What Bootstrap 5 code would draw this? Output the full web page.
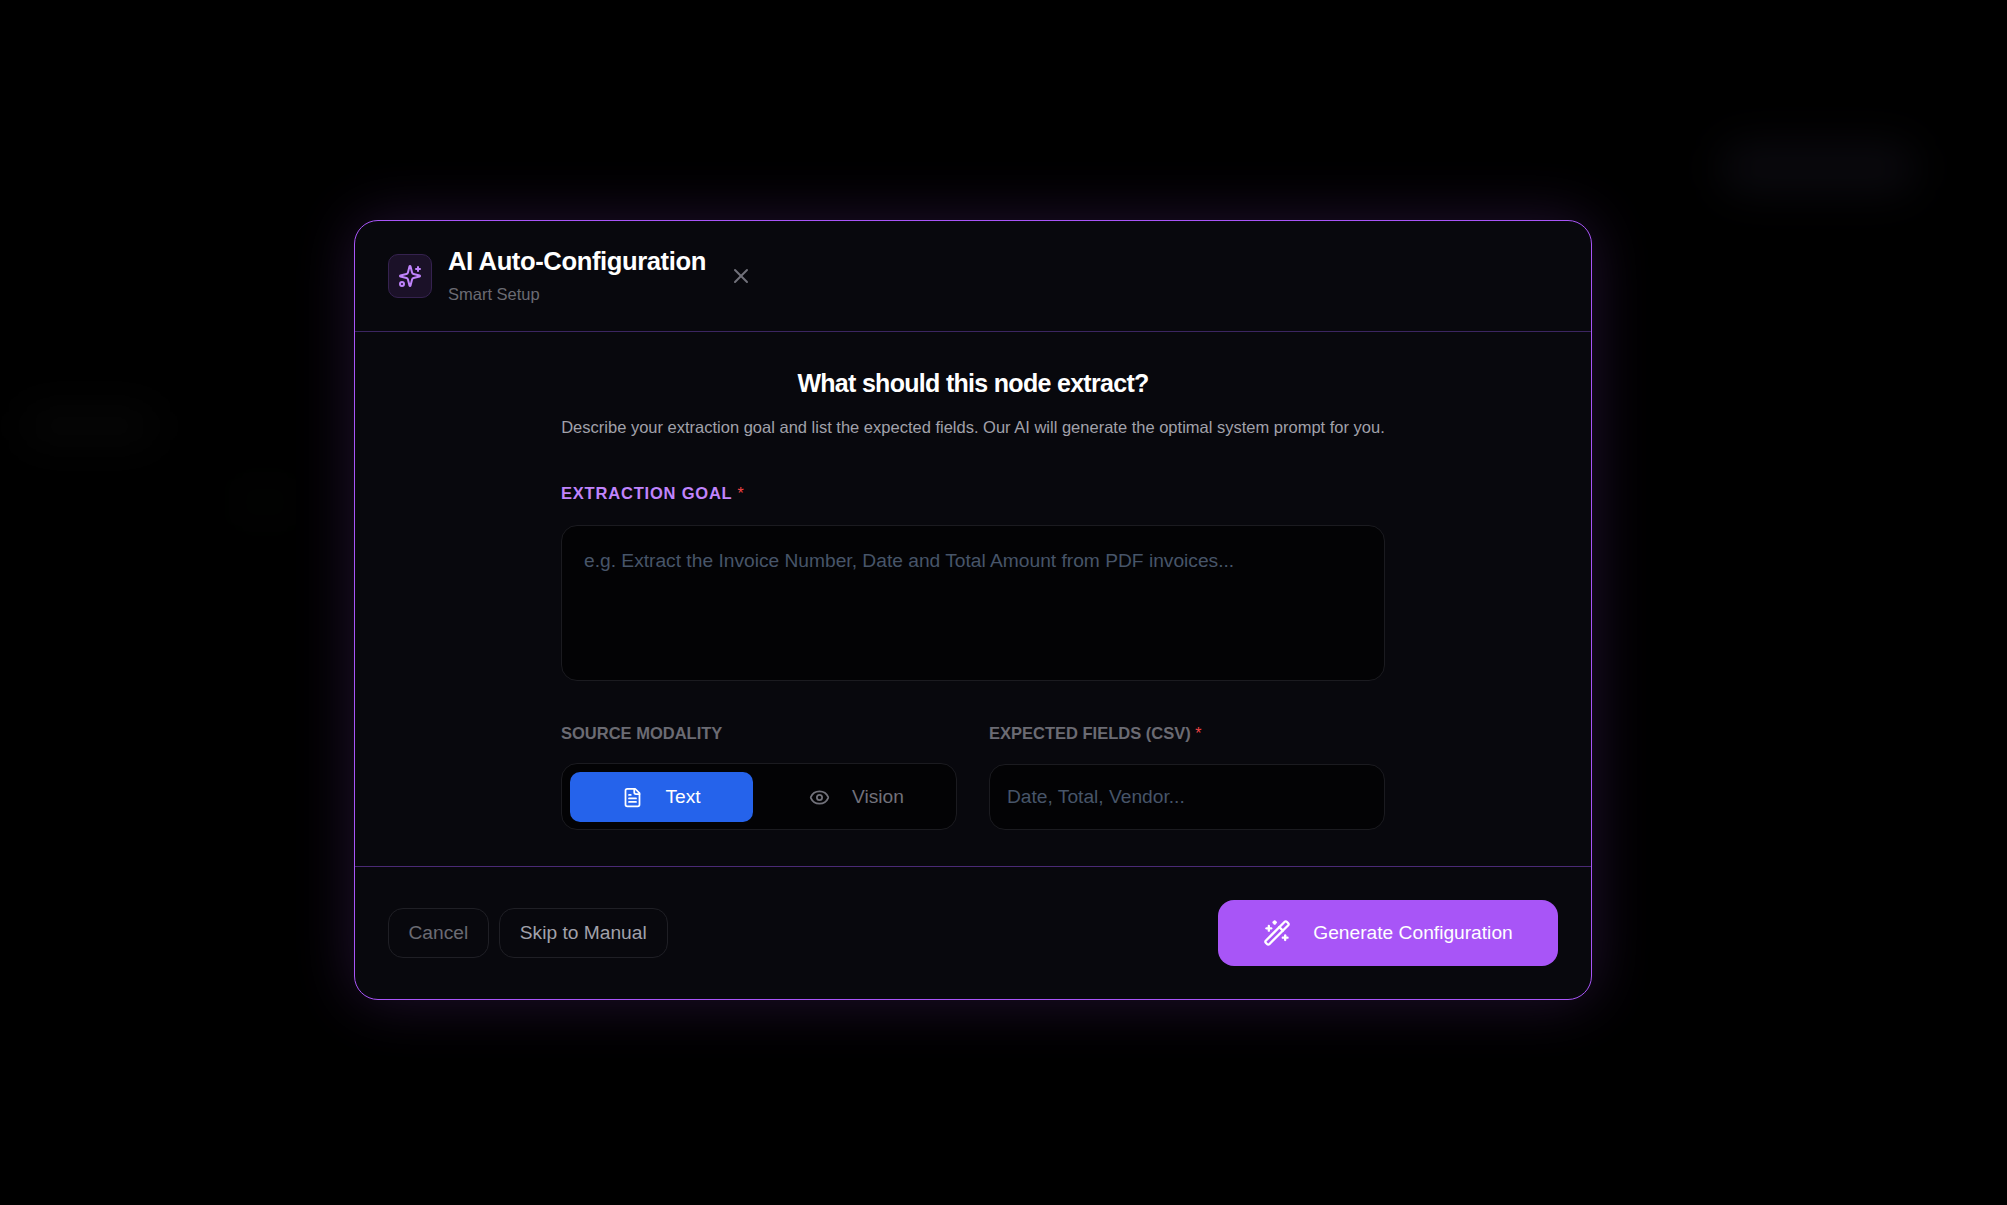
<!DOCTYPE html>
<html lang="en">
<head>
    <meta charset="UTF-8">
    <meta name="viewport" content="width=device-width, initial-scale=1.0">
    <title>AI Auto-Configuration</title>
    <link href="https://cdn.jsdelivr.net/npm/bootstrap@5.3.0/dist/css/bootstrap.min.css" rel="stylesheet">
    <style>
        html, body { height: 100%; }
        body { background: #000; font-family: "Liberation Sans", Arial, sans-serif; overflow: hidden; }
        /* what is left of the app behind the blurred overlay */
        .backdrop-blobs { position: absolute; inset: 0; filter: blur(20px); }
        .backdrop-blobs div { position: absolute; border-radius: 24px; }
        .blob-top { left: 1720px; top: 142px; width: 196px; height: 52px; background: #0a090e; }
        .blob-left { left: 22px; top: 408px; width: 135px; height: 36px; background: #060606; }
        .blob-small { left: 235px; top: 490px; width: 60px; height: 24px; background: #040504; }
        .page-wrap { position: relative; height: 100%; padding: 15px 61px 0 0; }
        .ai-modal { width: 1238px; height: 780px; background: #08080d; border: 1px solid #a855f7; border-radius: 24px; box-shadow: 0 0 60px rgba(168, 85, 247, .2); }
        .ai-head { height: 111px; padding: 0 33px; border-bottom: 1px solid #3b2560; }
        .ai-icon { width: 44px; height: 44px; background: #1b1128; border: 1px solid #35224f; border-radius: 10px; color: #c084fc; }
        .ai-title { font-size: 25.6px; line-height: 30px; font-weight: 700; color: #fff; letter-spacing: -.4px; }
        .ai-sub { font-size: 16.5px; line-height: 24px; color: #6b6b73; margin-top: 6px; }
        .ai-close { margin-left: 23px; color: #71717a; background: none; border: 0; padding: 0; line-height: 0; }
        .ai-body { flex: 1; padding-top: 35px; }
        .ai-inner { width: 824px; }
        .ai-heading { font-size: 25px; line-height: 32px; font-weight: 700; color: #fff; letter-spacing: -.7px; margin: 0; }
        .ai-desc { font-size: 16.5px; line-height: 24px; color: #a1a1aa; margin: 16px 0 0; }
        .goal-label { font-size: 16.5px; line-height: 24px; font-weight: 700; color: #c084fc; letter-spacing: .8px; margin: 42px 0 19px; }
        .req { color: #ef4444; font-size: 16px; font-weight: 400; }
        .goal-input { height: 156px; background: #030305; border: 1px solid #1b1b20; border-radius: 16px; padding: 21px 22px; font-size: 19.2px; line-height: 28px; color: #fff; resize: none; }
        .mini-label { font-size: 16.5px; line-height: 24px; font-weight: 700; color: #6b6b73; margin: 0 0 18px; }
        .fields-row { margin-top: 40px; gap: 32px; }
        .fields-row > div { flex: 1 1 0; }
        .mode-box { height: 67px; background: #030305; border: 1px solid #1b1b20; border-radius: 16px; padding: 8px; gap: 12px; }
        .mode-btn { flex: 1; height: 50px; border: 0; border-radius: 10px; background: none; color: #71717a; font-size: 19.2px; gap: 22px; }
        .mode-btn.active-mode { flex: 0 0 183px; background: #2563eb; color: #fff; }
        .fields-input { height: 66px; background: #030305; border: 1px solid #1b1b20; border-radius: 16px; padding: 0 17px; font-size: 19.2px; color: #fff; }
        .goal-input::placeholder, .fields-input::placeholder { color: #475569; opacity: 1; }
        .goal-input:focus, .fields-input:focus { background: #030305; border-color: #1b1b20; box-shadow: none; color: #fff; }
        .ai-foot { height: 133px; padding: 0 33px; border-top: 1px solid #4a2a75; }
        .foot-left { gap: 10px; }
        .ghost-btn { height: 50px; padding: 0 20px; background: none; border: 1px solid #1f1f25; border-radius: 15px; font-size: 19.2px; color: #a1a1aa; }
        .ghost-btn.dim-btn { padding: 0 19.5px; color: #6b6b73; }
        .gen-btn { height: 66px; width: 340px; background: #a855f7; border: 0; border-radius: 16px; color: #fff; font-size: 19.2px; gap: 22px; }
    </style>
</head>
<body>
    <div class="backdrop-blobs">
        <div class="blob-top"></div>
        <div class="blob-left"></div>
        <div class="blob-small"></div>
    </div>
    <div class="page-wrap d-flex justify-content-center align-items-center">
        <div class="ai-modal d-flex flex-column">
            <div class="ai-head d-flex align-items-center">
                <div class="ai-icon d-flex align-items-center justify-content-center">
                    <svg width="24" height="24" viewBox="0 0 24 24" fill="none" stroke="currentColor" stroke-width="2" stroke-linecap="round" stroke-linejoin="round"><path d="M9.94 15.5A2 2 0 0 0 8.5 14.06L2.37 12.48a.5.5 0 0 1 0-.96L8.5 9.94A2 2 0 0 0 9.94 8.5l1.58-6.13a.5.5 0 0 1 .96 0L14.06 8.5A2 2 0 0 0 15.5 9.94l6.13 1.58a.5.5 0 0 1 0 .96L15.5 14.06a2 2 0 0 0-1.44 1.44l-1.58 6.13a.5.5 0 0 1-.96 0z"/><path d="M20 3v4"/><path d="M22 5h-4"/><circle cx="4" cy="20" r="2"/></svg>
                </div>
                <div class="ms-3">
                    <div class="ai-title">AI Auto-Configuration</div>
                    <div class="ai-sub">Smart Setup</div>
                </div>
                <button class="ai-close" type="button" aria-label="Close">
                    <svg width="24" height="24" viewBox="0 0 24 24" fill="none" stroke="currentColor" stroke-width="2" stroke-linecap="round"><path d="M18 6 6 18"/><path d="m6 6 12 12"/></svg>
                </button>
            </div>
            <div class="ai-body d-flex justify-content-center">
                <div class="ai-inner">
                    <h2 class="ai-heading text-center">What should this node extract?</h2>
                    <p class="ai-desc text-center">Describe your extraction goal and list the expected fields. Our AI will generate the optimal system prompt for you.</p>
                    <div class="goal-label">EXTRACTION GOAL <span class="req">*</span></div>
                    <textarea class="form-control goal-input" placeholder="e.g. Extract the Invoice Number, Date and Total Amount from PDF invoices..."></textarea>
                    <div class="fields-row d-flex">
                        <div>
                            <div class="mini-label">SOURCE MODALITY</div>
                            <div class="mode-box d-flex">
                                <button class="mode-btn active-mode d-flex align-items-center justify-content-center" type="button">
                                    <svg width="21" height="21" viewBox="0 0 24 24" fill="none" stroke="currentColor" stroke-width="2" stroke-linecap="round" stroke-linejoin="round"><path d="M15 2H6a2 2 0 0 0-2 2v16a2 2 0 0 0 2 2h12a2 2 0 0 0 2-2V7Z"/><path d="M14 2v4a2 2 0 0 0 2 2h4"/><path d="M8 13h8"/><path d="M8 17h8"/><path d="M8 9h2"/></svg>
                                    <span>Text</span>
                                </button>
                                <button class="mode-btn d-flex align-items-center justify-content-center" type="button">
                                    <svg width="21" height="21" viewBox="0 0 24 24" fill="none" stroke="currentColor" stroke-width="2" stroke-linecap="round" stroke-linejoin="round"><path d="M2.06 12.35a1 1 0 0 1 0-.7 10.75 10.75 0 0 1 19.88 0 1 1 0 0 1 0 .7 10.75 10.75 0 0 1-19.88 0"/><circle cx="12" cy="12" r="3"/></svg>
                                    <span>Vision</span>
                                </button>
                            </div>
                        </div>
                        <div>
                            <div class="mini-label">EXPECTED FIELDS (CSV) <span class="req">*</span></div>
                            <input class="form-control fields-input" type="text" placeholder="Date, Total, Vendor...">
                        </div>
                    </div>
                </div>
            </div>
            <div class="ai-foot d-flex align-items-center justify-content-between">
                <div class="foot-left d-flex">
                    <button class="ghost-btn dim-btn" type="button">Cancel</button>
                    <button class="ghost-btn" type="button">Skip to Manual</button>
                </div>
                <button class="gen-btn d-flex align-items-center justify-content-center" type="button">
                    <svg width="28" height="28" viewBox="0 0 24 24" fill="none" stroke="currentColor" stroke-width="2" stroke-linecap="round" stroke-linejoin="round"><path d="m21.64 3.64-1.28-1.28a1.21 1.21 0 0 0-1.72 0L2.36 18.64a1.21 1.21 0 0 0 0 1.72l1.28 1.28a1.2 1.2 0 0 0 1.72 0L21.64 5.36a1.2 1.2 0 0 0 0-1.72"/><path d="m14 7 3 3"/><path d="M5 6v4"/><path d="M19 14v4"/><path d="M10 2v2"/><path d="M7 8H3"/><path d="M21 16h-4"/><path d="M11 3H9"/></svg>
                    <span>Generate Configuration</span>
                </button>
            </div>
        </div>
    </div>
    <script src="https://cdn.jsdelivr.net/npm/bootstrap@5.3.0/dist/js/bootstrap.bundle.min.js"></script>
</body>
</html>
